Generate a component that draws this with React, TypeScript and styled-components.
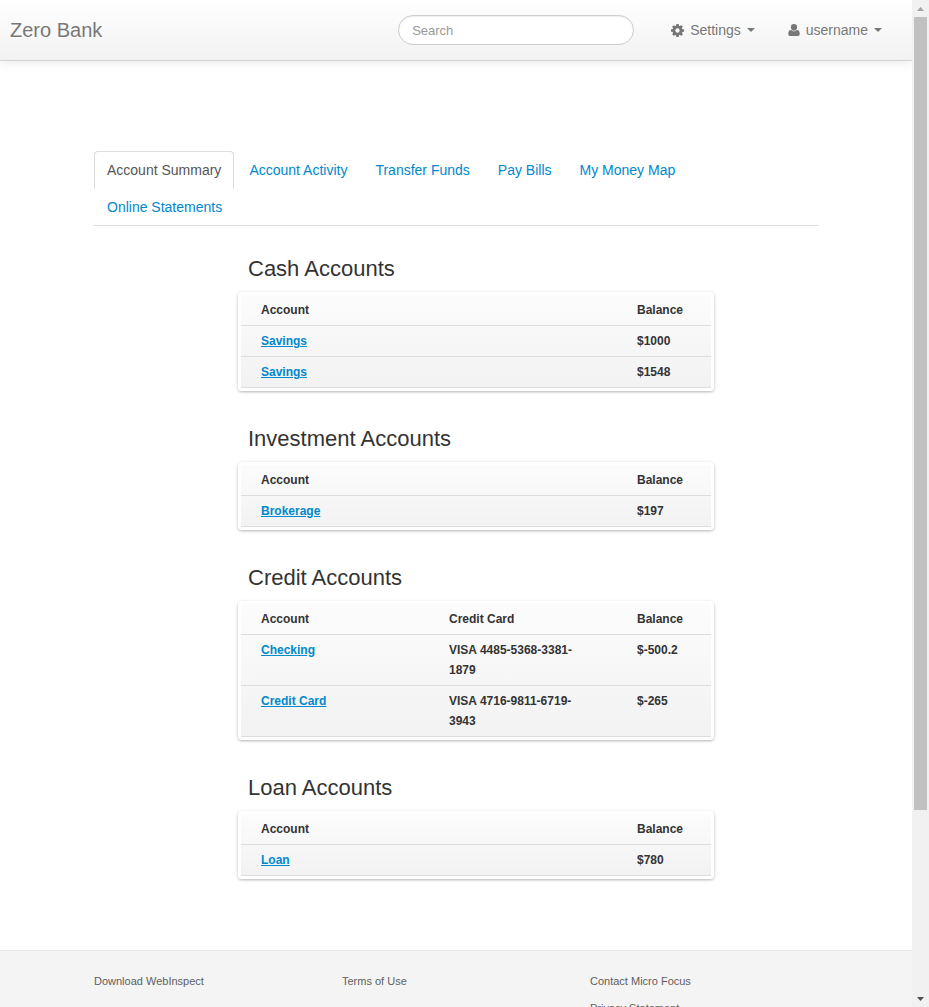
import React from "react";
import styled, { createGlobalStyle } from "styled-components";

const GlobalStyle = createGlobalStyle`
  *, *::before, *::after { box-sizing: border-box; }
  body {
    margin: 0;
    background: #fff;
    color: #333;
    font-family: "Liberation Sans", Arial, sans-serif;
    font-size: 14px;
    line-height: 20px;
  }
`;

const Shell = styled.div`
  display: flex;
  height: 100vh;
`;

const Page = styled.div`
  flex: 1;
  min-width: 0;
  overflow-x: hidden;
  overflow-y: auto;
  scrollbar-width: none;
  display: flex;
  flex-direction: column;
`;

const Navbar = styled.header`
  flex: none;
  display: flex;
  align-items: center;
  padding: 15px 30px 15px 10px;
  background: linear-gradient(#fff, #f2f2f2);
  border-bottom: 1px solid #d4d4d4;
  box-shadow: 0 1px 10px rgba(0, 0, 0, 0.1);
  color: #777;
`;

const Brand = styled.a`
  margin-right: auto;
  color: #777;
  font-size: 20px;
  text-decoration: none;
  text-shadow: 0 1px 0 #fff;
`;

const SearchInput = styled.input`
  width: 236px;
  height: 30px;
  margin-right: 37px;
  padding: 4px 13px;
  border: 1px solid #ccc;
  border-radius: 15px;
  background: #fff;
  box-shadow: inset 0 1px 1px rgba(0, 0, 0, 0.075);
  color: #555;
  font-family: inherit;
  font-size: 13px;
  &::placeholder { color: #999; opacity: 1; }
`;

const Menus = styled.nav`
  display: flex;
  gap: 33px;
`;

const MenuButton = styled.button`
  display: flex;
  align-items: center;
  gap: 6px;
  padding: 0;
  border: 0;
  background: none;
  color: #777;
  font: inherit;
  text-shadow: 0 1px 0 #fff;
`;

const Caret = styled.span`
  border: 4px solid transparent;
  border-top-color: #777;
  border-bottom: 0;
`;

const Container = styled.div`
  width: 100%;
  max-width: 724px;
  margin: 0 auto;
`;

const Main = styled.main`
  flex: none;
  padding: 90px 0 71px;
`;

const Tabs = styled.ul`
  display: flex;
  flex-wrap: wrap;
  margin: 0 0 28px;
  padding: 0;
  list-style: none;
  border-bottom: 1px solid #ddd;
`;

const TabItem = styled.li`
  margin: 0 2px -1px 0;
`;

const TabLink = styled.a<{ $active?: boolean }>`
  display: block;
  padding: 8px 12px;
  border: 1px solid ${(p) => (p.$active ? "#ddd" : "transparent")};
  border-bottom-color: transparent;
  border-radius: 4px 4px 0 0;
  color: ${(p) => (p.$active ? "#555" : "#08c")};
  text-decoration: none;
`;

const Boards = styled.div`
  display: flex;
  flex-direction: column;
  gap: 33px;
  margin: 0 104px 0 144px;
`;

const Heading = styled.h2`
  margin: 0 0 8px;
  padding-left: 10px;
  font-size: 22px;
  font-weight: 400;
  line-height: 30px;
`;

const Board = styled.div`
  border: 3px solid #fff;
  border-radius: 4px;
  background: linear-gradient(#fcfcfc, #f2f2f2) padding-box;
  box-shadow: 0 1px 3px rgba(0, 0, 0, 0.3);
`;

const Table = styled.table`
  width: 100%;
  table-layout: fixed;
  border-spacing: 0;
  font-size: 12px;
  font-weight: 700;
`;

const headOrCell = `
  padding: 5px 20px;
  border-bottom: 1px solid #ddd;
  text-align: left;
  vertical-align: top;
`;

const Th = styled.th<{ $width: string }>`
  ${headOrCell}
  width: ${(p) => p.$width};
`;

const Td = styled.td`
  ${headOrCell}
`;

const AccountLink = styled.a`
  color: #08c;
  text-decoration: underline;
`;

const Footer = styled.footer`
  flex: 1 0 auto;
  padding: 21px 0 24px;
  border-top: 1px solid #e5e5e5;
  background: #f4f4f4;
`;

const FooterColumns = styled.div`
  display: grid;
  grid-template-columns: repeat(3, 1fr);
  gap: 20px;
`;

const FooterList = styled.ul`
  display: flex;
  flex-direction: column;
  gap: 9px;
  margin: 0;
  padding: 0;
  list-style: none;
  font-size: 11px;
  line-height: 18px;
`;

const FooterLink = styled.a`
  color: #5f5f5f;
  text-decoration: none;
`;

const Scrollbar = styled.div`
  flex: none;
  width: 17px;
  display: flex;
  flex-direction: column;
  background: #f1f1f1;
`;

const ScrollArrow = styled.span`
  flex: none;
  display: flex;
  align-items: center;
  justify-content: center;
  height: 17px;
`;

const ScrollTrack = styled.div`
  flex: 1;
  padding: 0 2px;
`;

const ScrollThumb = styled.div`
  height: 81.5%;
  background: #c1c1c1;
`;

const GearIcon = () => (
  <svg width="13" height="13" viewBox="0 0 1536 1536" fill="currentColor" aria-hidden="true">
    <path d="M1024 768q0-106-75-181t-181-75-181 75-75 181 75 181 181 75 181-75 75-181zm512-109v222q0 12-8 23t-20 13l-185 28q-19 54-39 91 35 50 107 138 10 12 10 25t-9 23q-27 37-99 108t-94 71q-12 0-26-9l-138-108q-44 23-91 38-16 136-29 186-7 28-36 28H657q-14 0-24.500-8.500T621 1506l-28-184q-49-16-90-37l-141 107q-10 9-25 9-14 0-25-11-126-114-165-168-7-10-7-23 0-12 8-23 15-21 51-66.500t54-70.500q-27-50-41-99L29 913q-13-2-21-12.500T0 877V655q0-12 8-23t19-13l186-28q14-46 39-92-40-57-107-138-10-12-10-24 0-10 9-23 26-36 98.500-107.500T337 135q13 0 26 10l138 107q44-23 91-38 16-136 29-186 7-28 36-28h222q14 0 24.500 8.500T915 30l28 184q49 16 90 37l142-107q9-9 24-9 13 0 25 10 129 119 165 170 7 8 7 22 0 12-8 23-15 21-51 66.500t-54 70.500q26 50 41 98l183 28q13 2 21 12.500t8 23.500z" />
  </svg>
);

const UserIcon = () => (
  <svg width="12" height="14" viewBox="0 0 12 14" fill="currentColor" aria-hidden="true">
    <path d="M6 1a3.100 3.300 0 0 1 3.100 3.300C9.100 6.300 7.700 7.700 6 7.700S2.900 6.300 2.900 4.300A3.100 3.300 0 0 1 6 1zM3.100 7a4.200 4.200 0 0 0 5.800 0C11 7.100 11.700 8.600 11.700 10.900c0 1.300-.8 2.100-2 2.100H2.300c-1.200 0-2-.8-2-2.100C.3 8.600 1 7.100 3.100 7z" />
  </svg>
);

type Row = { account: string; card?: string; balance: string };
type Group = { title: string; rows: Row[] };

const tabs = ["Account Summary", "Account Activity", "Transfer Funds", "Pay Bills", "My Money Map", "Online Statements"];

const groups: Group[] = [
  { title: "Cash Accounts", rows: [{ account: "Savings", balance: "$1000" }, { account: "Savings", balance: "$1548" }] },
  { title: "Investment Accounts", rows: [{ account: "Brokerage", balance: "$197" }] },
  {
    title: "Credit Accounts",
    rows: [
      { account: "Checking", card: "VISA 4485-5368-3381-1879", balance: "$-500.2" },
      { account: "Credit Card", card: "VISA 4716-9811-6719-3943", balance: "$-265" },
    ],
  },
  { title: "Loan Accounts", rows: [{ account: "Loan", balance: "$780" }] },
];

const footerColumns = [["Download WebInspect"], ["Terms of Use"], ["Contact Micro Focus", "Privacy Statement"]];

function AccountGroup({ title, rows }: Group) {
  const hasCard = rows.some((r) => r.card);
  return (
    <section>
      <Heading>{title}</Heading>
      <Board>
        <Table aria-label={title}>
          <thead>
            <tr>
              <Th scope="col" $width={hasCard ? "40%" : "80%"}>Account</Th>
              {hasCard && <Th scope="col" $width="40%">Credit Card</Th>}
              <Th scope="col" $width="20%">Balance</Th>
            </tr>
          </thead>
          <tbody>
            {rows.map((r, i) => (
              <tr key={i}>
                <Td><AccountLink href="#">{r.account}</AccountLink></Td>
                {hasCard && <Td>{r.card}</Td>}
                <Td>{r.balance}</Td>
              </tr>
            ))}
          </tbody>
        </Table>
      </Board>
    </section>
  );
}

const ArrowIcon = ({ up }: { up?: boolean }) => (
  <svg width="7" height="4" viewBox="0 0 7 4" fill={up ? "#a3a3a3" : "#505050"} aria-hidden="true">
    <path d={up ? "M0 4 3.500 0 7 4z" : "M0 0 3.500 4 7 0z"} />
  </svg>
);

export default function App() {
  return (
    <>
      <GlobalStyle />
      <Shell>
        <Page>
          <Navbar>
            <Brand href="#">Zero Bank</Brand>
            <SearchInput type="text" placeholder="Search" aria-label="Search" />
            <Menus>
              <MenuButton type="button"><GearIcon />Settings<Caret /></MenuButton>
              <MenuButton type="button"><UserIcon />username<Caret /></MenuButton>
            </Menus>
          </Navbar>
          <Main>
            <Container>
              <Tabs>
                {tabs.map((t, i) => (
                  <TabItem key={t}><TabLink href="#" $active={i === 0}>{t}</TabLink></TabItem>
                ))}
              </Tabs>
              <Boards>
                {groups.map((g) => <AccountGroup key={g.title} {...g} />)}
              </Boards>
            </Container>
          </Main>
          <Footer>
            <Container>
              <FooterColumns>
                {footerColumns.map((links) => (
                  <FooterList key={links[0]}>
                    {links.map((l) => <li key={l}><FooterLink href="#">{l}</FooterLink></li>)}
                  </FooterList>
                ))}
              </FooterColumns>
            </Container>
          </Footer>
        </Page>
        <Scrollbar aria-hidden="true">
          <ScrollArrow><ArrowIcon up /></ScrollArrow>
          <ScrollTrack><ScrollThumb /></ScrollTrack>
          <ScrollArrow><ArrowIcon /></ScrollArrow>
        </Scrollbar>
      </Shell>
    </>
  );
}
